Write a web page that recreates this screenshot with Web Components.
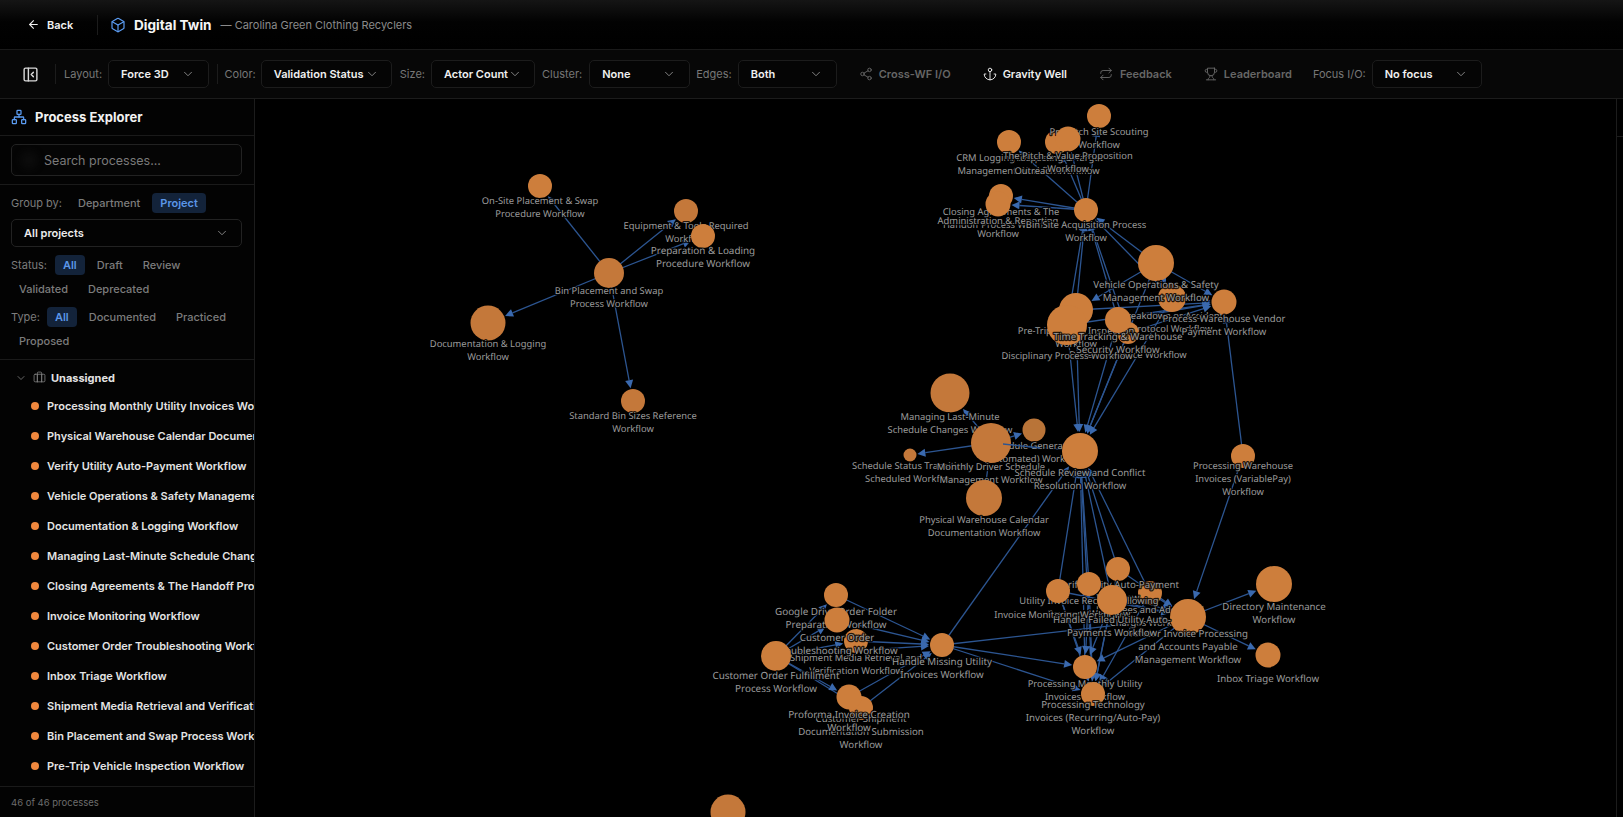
<!DOCTYPE html>
<html lang="en">
<head>
<meta charset="utf-8">
<title>Digital Twin</title>
<style>
  html,body{margin:0;height:100%;background:#000;overflow:hidden}
  body{font-family:Inter,"Liberation Sans",sans-serif;color:#eee;display:flex;flex-direction:column;height:817px}
</style>
</head>
<body>
<app-header></app-header>
<app-toolbar></app-toolbar>
<main-area></main-area>

<script>
const ICONS={
 back:'<path d="m12 19-7-7 7-7"/><path d="M19 12H5"/>',
 box:'<path d="M21 8a2 2 0 0 0-1-1.73l-7-4a2 2 0 0 0-2 0l-7 4A2 2 0 0 0 3 8v8a2 2 0 0 0 1 1.73l7 4a2 2 0 0 0 2 0l7-4A2 2 0 0 0 21 16Z"/><path d="m3.3 7 8.7 5 8.7-5"/><path d="M12 22V12"/>',
 chev:'<path d="m6 9 6 6 6-6"/>',
 share:'<circle cx="18" cy="5" r="3"/><circle cx="6" cy="12" r="3"/><circle cx="18" cy="19" r="3"/><path d="m8.59 13.51 6.83 3.98"/><path d="m15.41 6.51-6.82 3.98"/>',
 anchor:'<path d="M12 22V8"/><path d="M5 12H2a10 10 0 0 0 20 0h-3"/><circle cx="12" cy="5" r="3"/>',
 repeat:'<path d="m17 2 4 4-4 4"/><path d="M3 11v-1a4 4 0 0 1 4-4h14"/><path d="m7 22-4-4 4-4"/><path d="M21 13v1a4 4 0 0 1-4 4H3"/>',
 trophy:'<path d="M6 9H4.5a2.5 2.5 0 0 1 0-5H6"/><path d="M18 9h1.5a2.5 2.5 0 0 0 0-5H18"/><path d="M4 22h16"/><path d="M10 14.66V17c0 .55-.47.98-.97 1.21C7.85 18.75 7 20.24 7 22"/><path d="M14 14.66V17c0 .55.47.98.97 1.21C16.15 18.75 17 20.24 17 22"/><path d="M18 2H6v7a6 6 0 0 0 12 0V2Z"/>',
 network:'<rect x="16" y="16" width="6" height="6" rx="1"/><rect x="2" y="16" width="6" height="6" rx="1"/><rect x="9" y="2" width="6" height="6" rx="1"/><path d="M5 16v-3a1 1 0 0 1 1-1h12a1 1 0 0 1 1 1v3"/><path d="M12 12V8"/>',
 panel:'<rect x="3" y="3" width="18" height="18" rx="2"/><path d="M9 3v18"/><path d="m16 15-3-3 3-3"/>',
 case:'<path d="M16 20V4a2 2 0 0 0-2-2h-4a2 2 0 0 0-2 2v16"/><path d="M8 6v14M16 6v14"/><rect x="2" y="6" width="20" height="14" rx="2"/>'
};
class UiIcon extends HTMLElement{
  constructor(){super();this.attachShadow({mode:'open'});}
  connectedCallback(){
    const s=this.getAttribute('size')||14,w=this.getAttribute('stroke')||2;
    this.shadowRoot.innerHTML=`<style>:host{display:inline-flex;flex:none;line-height:0}</style><svg width="${s}" height="${s}" viewBox="0 0 24 24" fill="none" stroke="currentColor" stroke-width="${w}" stroke-linecap="round" stroke-linejoin="round">${ICONS[this.getAttribute('name')]||''}</svg>`;
  }
}
customElements.define('ui-icon',UiIcon);

class AppHeader extends HTMLElement{
  constructor(){super();this.attachShadow({mode:'open'}).innerHTML=`<style>
    :host{display:flex;align-items:center;flex:none;height:50px;box-sizing:border-box;border-bottom:1px solid #1a1a1a;background:linear-gradient(#151515,#020202 45%,#000);padding-left:27px}
    .back{display:flex;align-items:center;gap:7px;font-size:11px;font-weight:600;color:#f0f0f0;width:70px;box-sizing:border-box}
    .sep{width:1px;height:20px;background:#1c1c1c;margin-right:12px}
    .cube{color:#5b9cf2;margin-right:8px;display:flex}
    .t{font-size:13.6px;font-weight:700;color:#f5f5f5;margin-right:9px;white-space:nowrap}
    .s{font-size:11px;color:#8a8a8a;white-space:nowrap}
  </style>
  <div class="back"><ui-icon name="back" size="13"></ui-icon><span>Back</span></div>
  <div class="sep"></div>
  <div class="cube"><ui-icon name="box" size="16" stroke="1.8"></ui-icon></div>
  <div class="t">Digital Twin</div>
  <div class="s">— Carolina Green Clothing Recyclers</div>`;}
}
customElements.define('app-header',AppHeader);

class TbSelect extends HTMLElement{
  constructor(){super();this.attachShadow({mode:'open'}).innerHTML=`<style>
    :host{display:flex;align-items:center;justify-content:space-between;box-sizing:border-box;height:28px;border:1px solid #1c1c1c;border-radius:5px;padding:0 13px 0 12px;font-size:11px;font-weight:600;color:#f0f0f0;background:#050505;white-space:nowrap;flex:none}
    ui-icon{color:#8a8a8a}
  </style><slot></slot><ui-icon name="chev" size="14" stroke="1.6"></ui-icon>`;}
  connectedCallback(){this.style.width=this.getAttribute('w')+'px';}
}
customElements.define('tb-select',TbSelect);

class TbLabel extends HTMLElement{
  constructor(){super();this.attachShadow({mode:'open'}).innerHTML=`<style>:host{display:block;font-size:11px;color:#777;white-space:nowrap;flex:none}</style><slot></slot>`;}
}
customElements.define('tb-label',TbLabel);

class TbButton extends HTMLElement{
  constructor(){super();this.attachShadow({mode:'open'});}
  connectedCallback(){
    this.shadowRoot.innerHTML=`<style>
    :host{display:flex;align-items:center;gap:6px;font-size:11px;font-weight:600;color:#666;white-space:nowrap;flex:none}
    :host([on]){color:#f0f0f0}
    </style><ui-icon name="${this.getAttribute('icon')}" stroke="1.6" size="14"></ui-icon><slot></slot>`;
  }
}
customElements.define('tb-button',TbButton);

class AppToolbar extends HTMLElement{
  constructor(){super();this.attachShadow({mode:'open'}).innerHTML=`<style>
    :host{display:flex;align-items:center;flex:none;height:49px;box-sizing:border-box;border-bottom:1px solid #1c1c1c;background:#070707;padding-left:22px}
    .sep{width:1px;height:20px;background:#1c1c1c;flex:none}
    ui-icon.p{color:#d8d8d8}
  </style>
  <ui-icon class="p" name="panel" size="17" stroke="2"></ui-icon>
  <div class="sep" style="margin:0 8px 0 16px"></div>
  <tb-label style="margin-right:6px">Layout:</tb-label><tb-select w="101">Force 3D</tb-select>
  <div class="sep" style="margin:0 6.5px 0 8px"></div>
  <tb-label style="margin-right:5px">Color:</tb-label><tb-select w="131" style="padding-right:12px">Validation Status</tb-select>
  <tb-label style="margin:0 6px 0 8px">Size:</tb-label><tb-select w="104" style="padding-right:13px">Actor Count</tb-select>
  <tb-label style="margin:0 7px 0 7px">Cluster:</tb-label><tb-select w="101">None</tb-select>
  <tb-label style="margin:0 6px 0 6px">Edges:</tb-label><tb-select w="99">Both</tb-select>
  <tb-button icon="share" style="margin-left:22px">Cross-WF I/O</tb-button>
  <tb-button icon="anchor" on style="margin-left:32px">Gravity Well</tb-button>
  <tb-button icon="repeat" style="margin-left:32px;gap:7px">Feedback</tb-button>
  <tb-button icon="trophy" style="margin-left:32px">Leaderboard</tb-button>
  <tb-label style="margin:0 6px 0 21px">Focus I/O:</tb-label><tb-select w="110">No focus</tb-select>`;}
}
customElements.define('app-toolbar',AppToolbar);

class FilterPill extends HTMLElement{
  constructor(){super();this.attachShadow({mode:'open'}).innerHTML=`<style>
    :host{display:flex;align-items:center;height:20px;padding:0 8px;border-radius:4px;font-size:11px;font-weight:500;color:#7c7c7c;white-space:nowrap}
    :host([on]){background:#13233a;color:#5b96e8;font-weight:600}
  </style><slot></slot>`;}
}
customElements.define('filter-pill',FilterPill);

class ProcessItem extends HTMLElement{
  constructor(){super();this.attachShadow({mode:'open'}).innerHTML=`<style>
    :host{display:flex;align-items:center;gap:8px;height:30px;padding-left:31px;font-size:11px;font-weight:600;color:#e4e4e4;white-space:nowrap}
    i{width:8px;height:8px;border-radius:50%;background:#f0883e;flex:none}
  </style><i></i><slot></slot>`;}
}
customElements.define('process-item',ProcessItem);

class ProcessExplorer extends HTMLElement{
  constructor(){
    super();
    const items=["Processing Monthly Utility Invoices Workflow","Physical Warehouse Calendar Documentation Workflow","Verify Utility Auto-Payment Workflow","Vehicle Operations & Safety Management Workflow","Documentation & Logging Workflow","Managing Last-Minute Schedule Changes Workflow","Closing Agreements & The Handoff Process Workflow","Invoice Monitoring Workflow","Customer Order Troubleshooting Workflow","Inbox Triage Workflow","Shipment Media Retrieval and Verification Workflow","Bin Placement and Swap Process Workflow","Pre-Trip Vehicle Inspection Workflow"];
    this.attachShadow({mode:'open'}).innerHTML=`<style>
    :host{display:flex;flex-direction:column;width:255px;flex:none;box-sizing:border-box;border-right:1px solid #1c1c1c;background:#030303;height:100%;overflow:hidden}
    .title{display:flex;align-items:center;gap:8px;height:37px;box-sizing:border-box;border-bottom:1px solid #1a1a1a;padding-left:11px;font-size:13px;font-weight:700;color:#f2f2f2;flex:none}
    .title ui-icon{color:#5b9cf2}
    .search{padding:8px 12px 8px 11px;border-bottom:1px solid #1a1a1a;flex:none;height:49px;box-sizing:border-box}
    .input{height:32px;box-sizing:border-box;border:1px solid #222;border-radius:5px;display:flex;align-items:center;padding-left:32px;font-size:12.5px;color:#7a7a7a;position:relative;background:#050505}
    .input::before{content:"";position:absolute;left:8px;top:6px;width:18px;height:18px;border-radius:50%;background:#0b0b0b;filter:blur(3px)}
    .filters{padding:8px 12px 8px 11px;border-bottom:1px solid #1a1a1a;flex:none;box-sizing:border-box;height:175px}
    .row{display:flex;flex-wrap:wrap;align-items:center;gap:4px}
    .l{font-size:11px;color:#7c7c7c;white-space:nowrap}
    .sel{display:flex;align-items:center;justify-content:space-between;height:28px;box-sizing:border-box;border:1px solid #222;border-radius:5px;margin:6px 0 8px;padding:0 12px;font-size:11px;font-weight:600;color:#ececec}
    .sel ui-icon{color:#8a8a8a}
    .list{flex:1;overflow:hidden;padding-top:4px;min-height:0}
    .grp{display:flex;align-items:center;height:27px;padding-left:15px;font-size:11px;font-weight:700;color:#e4e4e4}
    .grp ui-icon{color:#808080}
    .foot{flex:none;height:31px;box-sizing:border-box;border-top:1px solid #1a1a1a;padding:0 11px;display:flex;align-items:center;font-size:9.5px;font-weight:400;color:#6d6d6d}
    </style>
    <div class="title"><ui-icon name="network" size="16" stroke="1.9"></ui-icon><span>Process Explorer</span></div>
    <div class="search"><div class="input">Search processes...</div></div>
    <div class="filters">
      <div class="row"><span class="l" style="margin-right:4px">Group by:</span><filter-pill>Department</filter-pill><filter-pill on>Project</filter-pill></div>
      <div class="sel"><span>All projects</span><ui-icon name="chev" size="14" stroke="1.6"></ui-icon></div>
      <div class="row"><span class="l" style="margin-right:4px">Status:</span><filter-pill on>All</filter-pill><filter-pill>Draft</filter-pill><filter-pill>Review</filter-pill><filter-pill>Validated</filter-pill><filter-pill>Deprecated</filter-pill></div>
      <div class="row" style="margin-top:8px"><span class="l" style="margin-right:3px">Type:</span><filter-pill on>All</filter-pill><filter-pill>Documented</filter-pill><filter-pill>Practiced</filter-pill><filter-pill>Proposed</filter-pill></div>
    </div>
    <div class="list">
      <div class="grp"><ui-icon name="chev" size="12" stroke="1.6"></ui-icon><ui-icon name="case" size="13" stroke="1.5" style="margin:0 5.5px"></ui-icon><span>Unassigned</span></div>
      ${items.map(t=>`<process-item>${t.replace(/&/g,'&amp;')}</process-item>`).join('')}
    </div>
    <div class="foot">46 of 46 processes</div>`;
  }
}
customElements.define('process-explorer',ProcessExplorer);

const NODES={
 onsite:[540,186,12,["On-Site Placement & Swap","Procedure Workflow"]],
 equip:[686,211,12,["Equipment & Tools Required","Workflow"],1],
 prep:[703,236,12,["Preparation & Loading","Procedure Workflow"]],
 bin:[609,273,15,["Bin Placement and Swap","Process Workflow"],1],
 doc:[488,323,17.5,["Documentation & Logging","Workflow"],1],
 std:[633,401,12,["Standard Bin Sizes Reference","Workflow"],1],
 crm:[1009,142,12,["CRM Logging & Pipeline","Management Workflow"]],
 lead:[1057,142,12,["Prospecting & Target","Outreach Workflow"]],
 prepitch:[1099,116,12,["Pre-Pitch Site Scouting","Workflow"]],
 pitch:[1068,139,12.5,["The Pitch & Value Proposition","Workflow"]],
 closing:[1001,196,12,["Closing Agreements & The","Handoff Process Workflow"]],
 admin:[998,204,12.5,["Administration & Reporting","Workflow"]],
 site:[1086,210,12,["Bin Site Acquisition Process","Workflow"]],
 brk:[1172,298,14,["Breakdown or Accident","Protocol Workflow"]],
 griev:[1128,333,11,["Driver Grievance Workflow"]],
 pretrip:[1076,310,17,["Pre-Trip Vehicle Inspection","Workflow"]],
 disc:[1067,325,20,["Disciplinary Process Workflow"]],
 time:[1118,320,13,["Time Tracking & Warehouse","Security Workflow"]],
 vehicle:[1156,263,18,["Vehicle Operations & Safety","Management Workflow"]],
 vendor:[1224,302,12.5,["Process Warehouse Vendor","Payment Workflow"]],
 managing:[950,393,19.5,["Managing Last-Minute","Schedule Changes Workflow"],1],
 gen:[1034,430,11.5,["Schedule Generation","(Automated) Workflow"],2],
 status:[910,455,6.5,["Schedule Status Transition","Scheduled Workflow"],1],
 monthly:[991,443,20,["Monthly Driver Schedule","Management Workflow"],1],
 review:[1080,451,18,["Schedule Review and Conflict","Resolution Workflow"]],
 physical:[984,498,18,["Physical Warehouse Calendar","Documentation Workflow"],1],
 pwi:[1243,456,12,["Processing Warehouse","Invoices (VariablePay)","Workflow"]],
 fees:[1150,593,12,["Late Fees and Additional","Charges Workflow"]],
 verify:[1118,569,12,["Verify Utility Auto-Payment","Workflow"]],
 util:[1089,584,12,["Utility Invoice Receipt Following","Payment Workflow"]],
 mon:[1058,591,12,["Invoice Monitoring Workflow"]],
 inv:[1188,617,18,["Vendor Invoice Processing","and Accounts Payable","Management Workflow"]],
 failed:[1112,600,15,["Handle Failed Utility Auto-","Payments Workflow"]],
 dir:[1274,584,18,["Directory Maintenance","Workflow"]],
 inbox:[1268,655,12.5,["Inbox Triage Workflow"]],
 pm:[1085,667,12,["Processing Monthly Utility","Invoices Workflow"]],
 tech:[1093,694,12,["Processing Technology","Invoices (Recurring/Auto-Pay)","Workflow"]],
 media:[856,641,12,["Shipment Media Retrieval and","Verification Workflow"]],
 gdrive:[836,595,12,["Google Drive Order Folder","Preparation Workflow"]],
 trouble:[837,620,12.5,["Customer Order","Troubleshooting Workflow"]],
 fulfil:[776,656,15,["Customer Order Fulfillment","Process Workflow"]],
 hm:[942,645,12,["Handle Missing Utility","Invoices Workflow"]],
 ship:[861,708,12,["Customer Shipment","Documentation Submission","Workflow"]],
 prof:[849,697,12.5,["Proforma Invoice Creation","Workflow"]],
 orphan:[728,812,17.5,[],1]
};
const SCALE={prep:1.05,time:1.05,vehicle:1.03,review:1.02,dir:1.03,vendor:1.02,fulfil:1.05,gdrive:1.05,hm:1.04,trouble:1.04,prof:1.05,ship:1.03,inbox:1.03,tech:1.03,inv:1.03,verify:1.03,failed:1.03};
const EDGES=`bin onsite|bin equip|bin prep|bin doc|bin std|site prepitch|site crm|site lead|site pitch|site closing|site admin
vehicle site|brk site|time site|griev site|disc site|pretrip site|vehicle pretrip|vehicle brk|vehicle vendor
pretrip vendor|disc vendor|time vendor|griev vendor|brk vendor|pwi vendor
pretrip review|disc review|time review|griev review|vehicle review|brk review
monthly managing|monthly status|monthly gen|monthly physical n|review monthly n
hm review|mon review|pm review|tech review|failed review|verify review|fees review|util review
pwi inv|inv dir|inv inbox|verify inv|failed inv|fees inv|mon inv|util inv|hm inv
mon pm|mon tech|util pm|util tech|failed pm|failed tech|verify tech|fees tech|inv tech|inv pm|hm pm|hm tech
fulfil gdrive|fulfil trouble|fulfil media|fulfil prof|fulfil ship|fulfil hm|gdrive hm|trouble hm|media hm|prof hm|ship hm`.split(/[|\n]/).map(s=>s.trim().split(' '));

class GraphCanvas extends HTMLElement{
  constructor(){
    super();
    const esc=s=>s.replace(/&/g,'&amp;');
    const fills=['#cd7e3c','#c4783a','#b97438'];
    let lines='',heads='',body='';
    for(const [a,b,n] of EDGES){
      const A=NODES[a],B=NODES[b];
      const dx=B[0]-A[0],dy=B[1]-A[1],d=Math.hypot(dx,dy),ux=dx/d,uy=dy/d;
      const tx=B[0]-ux*(B[2]+1),ty=B[1]-uy*(B[2]+1);
      const bx=tx-ux*8,by=ty-uy*8,px=-uy*4,py=ux*4;
      lines+=`<line x1="${A[0]}" y1="${A[1]}" x2="${n?B[0]:bx.toFixed(1)}" y2="${n?B[1]:by.toFixed(1)}"/>`;
      if(!n)heads+=`<polygon points="${tx.toFixed(1)},${ty.toFixed(1)} ${(bx+px).toFixed(1)},${(by+py).toFixed(1)} ${(bx-px).toFixed(1)},${(by-py).toFixed(1)}"/>`;
    }
    for(const k in NODES){
      const [x,y,r,ls,dim]=NODES[k];
      body+=`<circle cx="${x}" cy="${y}" r="${r}" fill="${fills[dim||0]}"/>`;
      const off=(x<800&&y<420)||k==='site'?-1:(y>=580?1:0);
      const mid=y+r+10+off,top=mid-(ls.length-1)*6.5;
      const fs=(9.4*(SCALE[k]||1)).toFixed(2);
      ls.forEach((t,i)=>{body+=`<text x="${x}" y="${(top+i*13+3.5).toFixed(1)}" style="font-size:${fs}px">${esc(t)}</text>`;});
      if(k==='monthly')body+=`<line class="f" x1="1003" y1="444" x2="1040" y2="448"/>`;
    }
    this.attachShadow({mode:'open'}).innerHTML=`<style>
      :host{display:block;flex:1;min-width:0;height:100%;background:#000;position:relative;overflow:hidden}
      svg{display:block;width:100%;height:100%}
      .e line,.f{stroke:#2c5591;stroke-width:1.3}
      .a polygon{fill:#3a69ae}
      text{font-family:"Noto Sans","Open Sans",sans-serif;text-rendering:geometricPrecision;fill:#9c9c9c;text-anchor:middle;stroke:rgba(0,0,0,.82);stroke-width:2.4px;paint-order:stroke;stroke-linejoin:round}
    </style>
    <svg viewBox="255 99 1361 718" preserveAspectRatio="xMinYMin slice">
      <g class="e">${lines}</g><g class="a">${heads}</g><g>${body}</g>
    </svg>`;
  }
}
customElements.define('graph-canvas',GraphCanvas);

class SideRail extends HTMLElement{
  constructor(){super();this.attachShadow({mode:'open'}).innerHTML=`<style>
    :host{display:block;width:7px;flex:none;box-sizing:border-box;border-left:1px solid #1c1c1c;height:100%;background:#000}
    div{height:37px;border-bottom:1px solid #1c1c1c}
  </style><div></div>`;}
}
customElements.define('side-rail',SideRail);

class MainArea extends HTMLElement{
  constructor(){super();this.attachShadow({mode:'open'}).innerHTML=`<style>
    :host{display:flex;flex:1;min-height:0}
  </style><process-explorer></process-explorer><graph-canvas></graph-canvas><side-rail></side-rail>`;}
}
customElements.define('main-area',MainArea);
</script>
</body>
</html>
